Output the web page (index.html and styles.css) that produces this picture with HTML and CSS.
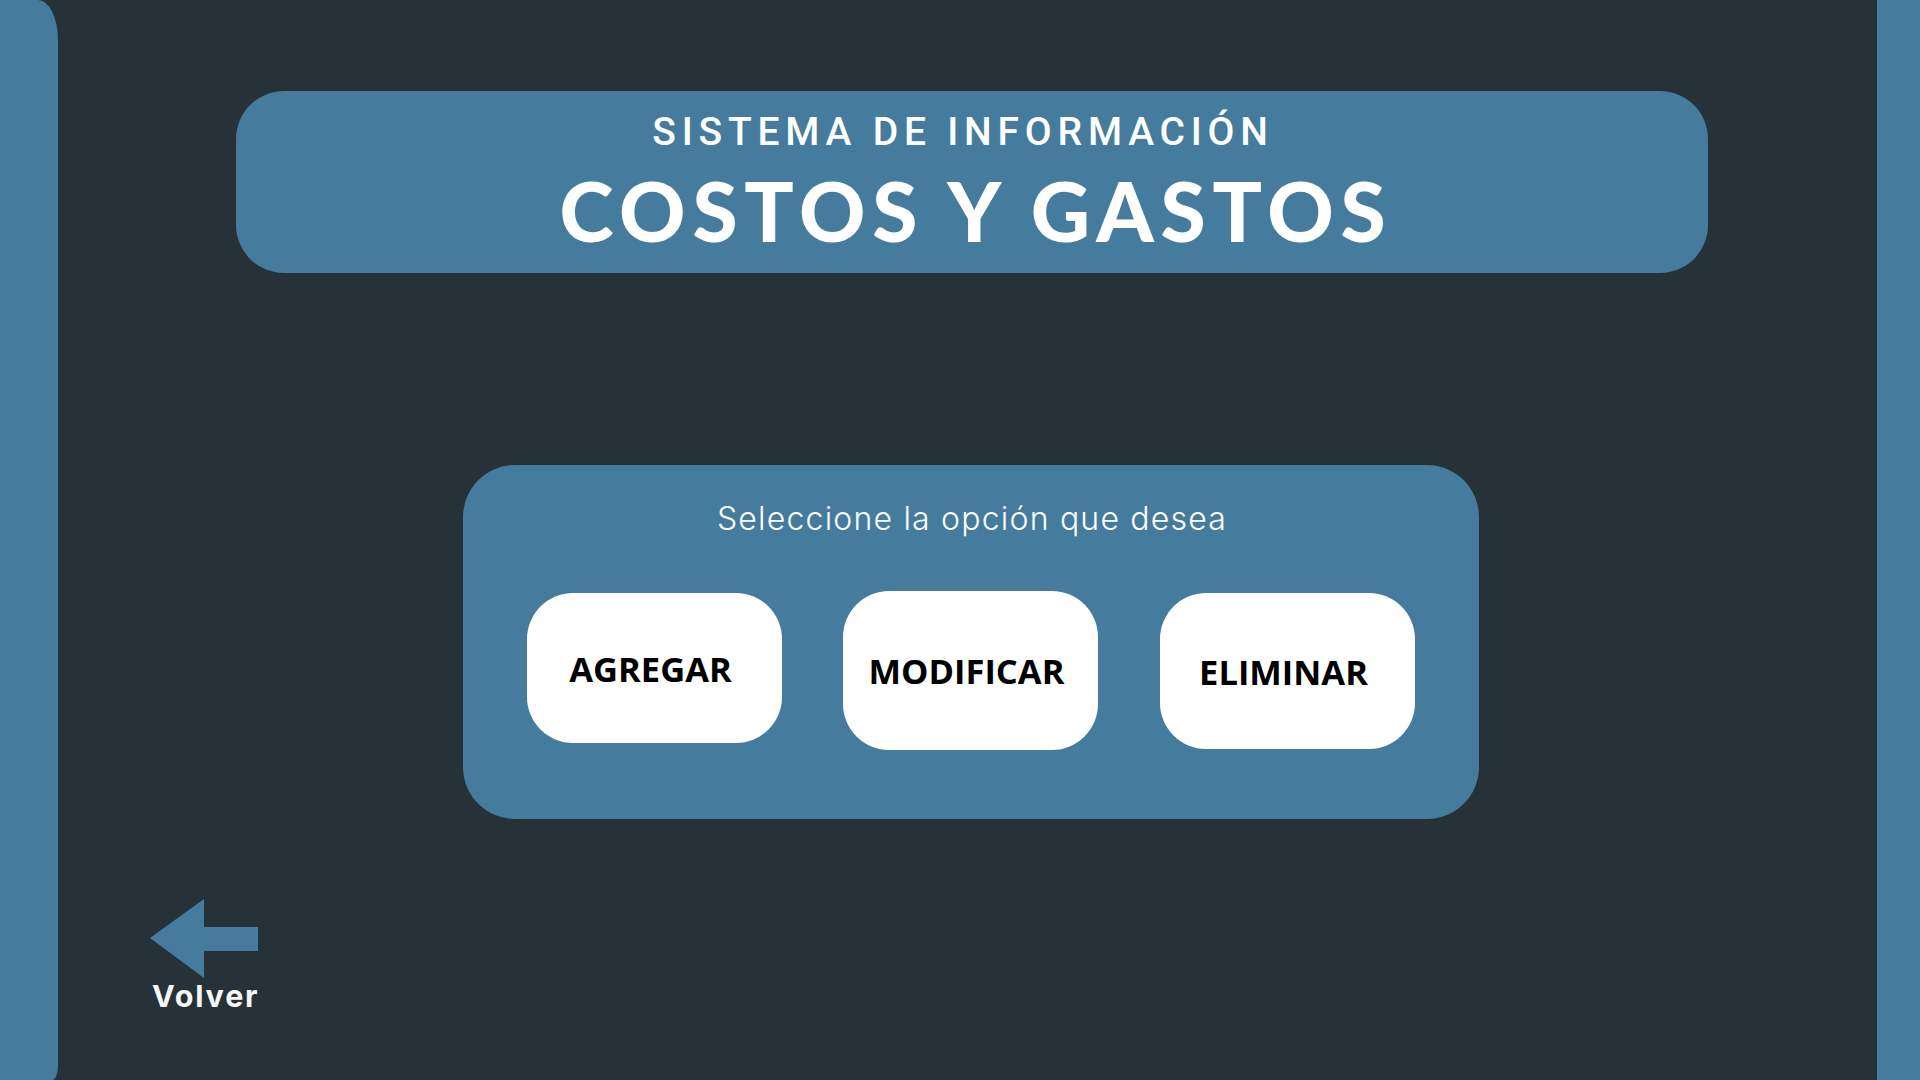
FILE: index.html
```html
<!DOCTYPE html>
<html lang="es">
<head>
<meta charset="utf-8">
<title>Costos y Gastos</title>
<link rel="stylesheet" href="styles.css">
</head>
<body>
<div class="screen">
  <aside class="side side-left"></aside>
  <main class="content">
    <header class="title-card">
      <p class="kicker">SISTEMA DE INFORMACIÓN</p>
      <h1 class="title">COSTOS Y GASTOS</h1>
    </header>
    <section class="options">
      <p class="prompt">Seleccione la opción que desea</p>
      <div class="actions">
        <button class="action action-add">AGREGAR</button>
        <button class="action action-edit">MODIFICAR</button>
        <button class="action action-delete">ELIMINAR</button>
      </div>
    </section>
    <a class="back" href="#">
      <svg class="back-icon" width="109" height="79" viewBox="0 0 109 79" aria-hidden="true">
        <polygon points="0,39 54,0 54,28 108,28 108,52 54,52 54,79" fill="#457b9d"/>
      </svg>
      <span class="back-label">Volver</span>
    </a>
  </main>
  <aside class="side side-right"></aside>
</div>
</body>
</html>
```
FILE: styles.css
```css
html, body {
  margin: 0;
  padding: 0;
}

body {
  background: #263238;
}

.screen {
  display: flex;
  width: 1920px;
  height: 1080px;
  background: #263238;
  overflow: hidden;
}

.side {
  flex: none;
  background: #457b9d;
}

.side-left {
  width: 58px;
  border-radius: 0 20px 6px 0 / 0 40px 14px 0;
}

.side-right {
  width: 43px;
}

.content {
  flex: 1;
  display: flex;
  flex-direction: column;
  align-items: flex-start;
}

.title-card {
  box-sizing: border-box;
  margin: 91px 0 0 178px;
  width: 1472px;
  height: 182px;
  padding-top: 18px;
  background: #457b9d;
  border-radius: 48px;
  display: flex;
  flex-direction: column;
  align-items: center;
  color: #ffffff;
}

.kicker {
  margin: 0;
  padding-right: 18px;
  font-family: Roboto, "Liberation Sans", sans-serif;
  font-weight: 500;
  font-size: 39px;
  line-height: 46px;
  letter-spacing: 5.8px;
}

.title {
  margin: 14px 0 0 0;
  padding-left: 8px;
  font-family: Lato, "Liberation Sans", sans-serif;
  font-weight: 900;
  font-size: 82px;
  line-height: 82px;
  letter-spacing: 6.8px;
}

.options {
  box-sizing: border-box;
  margin: 192px 0 0 405px;
  width: 1016px;
  height: 354px;
  padding-top: 34px;
  background: #457b9d;
  border-radius: 52px;
}

.prompt {
  margin: 0;
  padding-left: 2px;
  text-align: center;
  font-family: Inter, "Liberation Sans", sans-serif;
  font-weight: 300;
  font-size: 32px;
  line-height: 40px;
  letter-spacing: 1.2px;
  color: #ffffff;
}

.actions {
  display: flex;
  align-items: flex-start;
  gap: 62px;
  margin-top: 52px;
  padding-left: 64px;
}

.action {
  box-sizing: border-box;
  width: 255px;
  border: none;
  padding: 0 8px 0 0;
  background: #ffffff;
  border-radius: 46px;
  display: flex;
  align-items: center;
  justify-content: center;
  font-family: "Open Sans", "Liberation Sans", sans-serif;
  font-weight: 700;
  font-size: 34.5px;
  color: #000000;
  cursor: pointer;
}

.action-add {
  margin-top: 2px;
  height: 150px;
  margin-right: -1px;
}

.action-edit {
  height: 159px;
}

.action-delete {
  margin-top: 2px;
  height: 156px;
}

.back {
  margin: 80px 0 0 92px;
  display: flex;
  flex-direction: column;
  align-items: flex-start;
  text-decoration: none;
}

.back-icon {
  display: block;
}

.back-label {
  margin-left: 2px;
  font-family: Inter, "Liberation Sans", sans-serif;
  font-weight: 700;
  font-size: 30.5px;
  line-height: 36px;
  letter-spacing: 1.8px;
  color: #f7f7f7;
}
```
